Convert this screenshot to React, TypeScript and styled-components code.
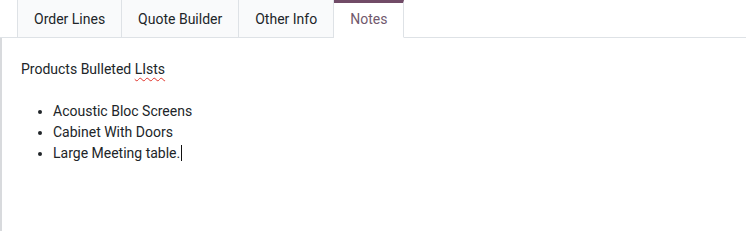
import React from "react";
import styled, { createGlobalStyle } from "styled-components";

const Global = createGlobalStyle`
  html, body { margin: 0; padding: 0; background: #fff; }
  body { font-family: Roboto, "Noto Sans", sans-serif; font-size: 14px; color: #212529; }
`;

const Page = styled.div`
  width: 746px;
  height: 231px;
  display: flex;
  flex-direction: column;
  overflow: hidden;
`;

const TabBar = styled.div`
  display: flex;
  padding-left: 17px;
  border-bottom: 1px solid #dee2e6;
  height: 38px;
  box-sizing: border-box;
`;

const Tab = styled.div<{ $active?: boolean; $first?: boolean }>`
  display: flex;
  align-items: center;
  justify-content: center;
  padding: 0 16px;
  margin-bottom: -1px;
  box-sizing: border-box;
  height: 38px;
  font-size: 14px;
  border: 1px solid #dee2e6;
  border-left-width: ${(p) => (p.$first ? "1px" : "0")};
  background: ${(p) => (p.$active ? "#fff" : "#f9fafb")};
  color: ${(p) => (p.$active ? "#71596d" : "#212529")};
  border-bottom-color: ${(p) => (p.$active ? "#fff" : "#dee2e6")};
  border-top: ${(p) => (p.$active ? "3px solid #714b67" : "0")};
  padding-bottom: ${(p) => (p.$active ? "3px" : "0")};
`;

const Content = styled.div`
  flex: 1;
  border-left: 2px solid #d8dadd;
  padding: 21px 19px;
  line-height: 21px;
`;

const Para = styled.p`
  margin: 0 0 21px;
`;

const Misspelled = styled.span`
  text-decoration: underline wavy #e0342c;
  text-decoration-thickness: 1px;
  text-underline-offset: 3px;
`;

const List = styled.ul`
  margin: 0;
  padding-left: 32px;
`;

const Item = styled.li``;

const Caret = styled.span`
  display: inline-block;
  width: 1px;
  height: 16px;
  background: #111;
  vertical-align: -3px;
  margin-left: 1px;
`;

export default function App() {
  const tabs = ["Order Lines", "Quote Builder", "Other Info", "Notes"];
  return (
    <Page>
      <Global />
      <TabBar>
        {tabs.map((t, i) => (
          <Tab key={t} $active={t === "Notes"} $first={i === 0}>
            {t}
          </Tab>
        ))}
      </TabBar>
      <Content>
        <Para>
          Products Bulleted <Misspelled>LIsts</Misspelled>
        </Para>
        <List>
          <Item>Acoustic Bloc Screens</Item>
          <Item>Cabinet With Doors</Item>
          <Item>
            Large Meeting table.<Caret />
          </Item>
        </List>
      </Content>
    </Page>
  );
}
